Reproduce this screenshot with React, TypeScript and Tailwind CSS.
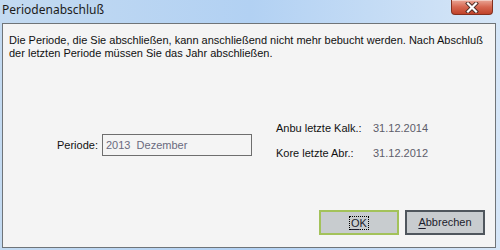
import React from "react"

function CloseButton() {
  return (
    <div className="flex h-[15px] w-[42px] items-center justify-center rounded-b-[4px] border border-t-0 border-[#83301f] bg-gradient-to-b from-[#e9a596] via-[#d66650] to-[#c0422a] shadow-[inset_0_1px_0_rgba(255,255,255,0.45)]">
      <svg width="14" height="11" viewBox="0 0 14 11">
        <path d="M3 1.5 L11 9.5 M11 1.5 L3 9.5" stroke="#4a2a24" strokeWidth="4" strokeLinecap="square" />
        <path d="M3 1.5 L11 9.5 M11 1.5 L3 9.5" stroke="#ffffff" strokeWidth="2.2" strokeLinecap="square" />
      </svg>
    </div>
  )
}

export default function App() {
  return (
    <div className="flex h-[250px] w-[500px] flex-col bg-gradient-to-r from-[#c3daf1] via-[#b2d1f3] to-[#d6e6f7] font-['Liberation_Sans',Arial,sans-serif] text-[11px] leading-[13px] text-[#111]">
      {/* title bar */}
      <div className="flex h-[23px] shrink-0 items-start justify-between pl-[2px] pr-[7px]">
        <span className="pt-[2px] font-['Noto_Sans',sans-serif] text-[12px] leading-[16px] text-[#1b1b1b]">
          Periodenabschluß
        </span>
        <CloseButton />
      </div>

      {/* client area */}
      <div className="mb-[2px] ml-[2px] mr-[4px] flex flex-1 flex-col border border-[#6f7478] bg-[#f4f4f4] pb-[12px] pl-[6px] pr-[10px] pt-[10px]">
        <p>
          Die Periode, die Sie abschließen, kann anschließend nicht mehr bebucht werden. Nach Abschluß
          <br />
          der letzten Periode müssen Sie das Jahr abschließen.
        </p>

        <div className="mt-[62px] flex items-start pl-[48px]">
          <div className="mt-[12px] flex items-center">
            <span className="w-[45px]">Periode:</span>
            <div className="flex h-[22px] w-[150px] items-center border border-[#6e6e6e] bg-[#f4f4f4] pl-[3px] text-[#6a6a7e]">
              2013&nbsp;&nbsp;Dezember
            </div>
          </div>
          <div className="ml-[24px] flex flex-col gap-[12px]">
            <div className="flex">
              <span className="w-[97px]">Anbu letzte Kalk.:</span>
              <span className="text-[#5d5d6a]">31.12.2014</span>
            </div>
            <div className="flex">
              <span className="w-[97px]">Kore letzte Abr.:</span>
              <span className="text-[#5d5d6a]">31.12.2012</span>
            </div>
          </div>
        </div>

        <div className="mt-auto flex justify-end gap-[6px]">
          <button
            type="button"
            className="flex h-[25px] w-[80px] items-center justify-center border-2 border-[#a3c25a] bg-[#c8cccf] text-[#1c1c2c]"
          >
            <span className="border border-dotted border-black px-[1px] leading-[12px]">
              <span className="underline underline-offset-2">O</span>K
            </span>
          </button>
          <button
            type="button"
            className="flex h-[25px] w-[80px] items-center justify-center border-2 border-[#4f565d] bg-[#c8cccf] text-[#1c1c2c]"
          >
            <span>
              <span className="underline underline-offset-2">A</span>bbrechen
            </span>
          </button>
        </div>
      </div>
    </div>
  )
}
